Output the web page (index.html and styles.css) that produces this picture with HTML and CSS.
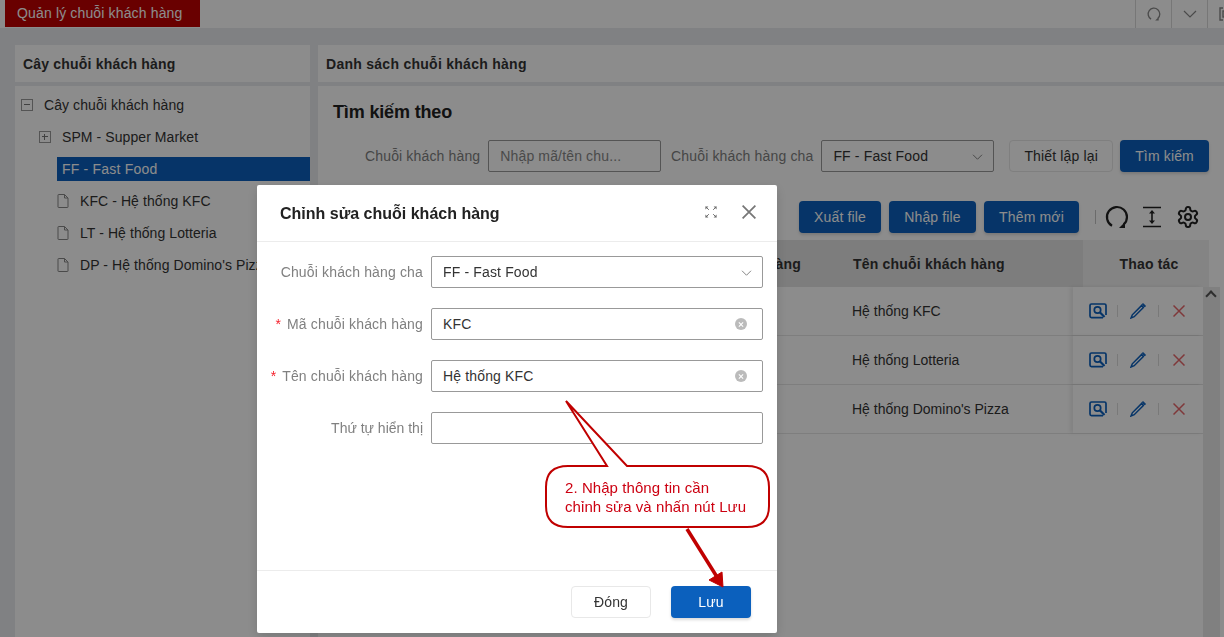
FILE: index.html
```html
<!DOCTYPE html>
<html lang="vi">
<head>
<meta charset="utf-8">
<title>Quản lý chuỗi khách hàng</title>
<link rel="stylesheet" href="styles.css">
</head>
<body>
<svg class="sprite" aria-hidden="true">
  <symbol id="i-refresh" viewBox="0 0 24 24"><path d="M7 20.7A10 10 0 1 1 18.7 19.4" fill="none" stroke="currentColor" stroke-width="2.2"/><path d="M20 17v6h-6z" fill="currentColor"/></symbol>
  <symbol id="i-search" viewBox="0 0 18 16"><path d="M14 14.6H2.5a1.5 1.5 0 0 1-1.5-1.5V2.5A1.5 1.5 0 0 1 2.5 1h13A1.5 1.5 0 0 1 17 2.500V12" fill="none" stroke="currentColor" stroke-width="1.700"/><circle cx="8.500" cy="7" r="3.200" fill="none" stroke="currentColor" stroke-width="1.700"/><path d="M10.800 9.300l4.700 4.700" stroke="currentColor" stroke-width="2.200"/></symbol>
  <symbol id="i-pencil" viewBox="0 0 16 16"><path d="M11.500 2.600L2.300 11.800 1 15l3.200-1.300L13.400 4.500z" fill="none" stroke="currentColor" stroke-width="1.500"/><path d="M12 1.500l1-1 2.500 2.500-1 1z" fill="currentColor" stroke="currentColor"/></symbol>
  <symbol id="i-x" viewBox="0 0 12 12"><path d="M.5.500l11 11M11.500.500l-11 11" stroke="currentColor" stroke-width="1.500" fill="none"/></symbol>
  <symbol id="i-file" viewBox="0 0 12 14"><path d="M1.500.500H7.500L11 4v9a.5.5 0 0 1-.5.500h-9a.5.5 0 0 1-.5-.500V1a.5.5 0 0 1 .5-.500zM7.500.500V4H11" fill="none" stroke="currentColor"/></symbol>
  <symbol id="i-chevron" viewBox="0 0 14 8"><path d="M1 1l6 6 6-6" fill="none" stroke="currentColor" stroke-width="1.200"/></symbol>
</svg>

<header class="topbar">
  <div class="tab">Quản lý chuỗi khách hàng</div>
  <div class="top-tools">
    <div class="top-tool"><svg class="ic-14"><use href="#i-refresh"/></svg></div>
    <div class="top-tool"><svg class="ic-chev-top"><use href="#i-chevron"/></svg></div>
    <div class="top-tool">
      <svg class="ic-14" viewBox="0 0 14 14"><path d="M4 1H1v12h3M10 1h3v12h-3" fill="none" stroke="currentColor" stroke-width="1.400"/><rect x="4" y="4" width="6" height="6" fill="none" stroke="currentColor" stroke-width="1.400"/></svg>
    </div>
  </div>
</header>

<main class="workspace">
  <section class="col-tree">
    <h2 class="panel-head panel-head-tree">Cây chuỗi khách hàng</h2>
    <div class="panel-body tree">
      <div class="node"><span class="box box-minus"></span><span>Cây chuỗi khách hàng</span></div>
      <div class="node lvl-1"><span class="box box-plus"></span><span>SPM - Supper Market</span></div>
      <div class="node lvl-sel"><span class="sel">FF - Fast Food</span></div>
      <div class="node lvl-2"><svg class="ic-file"><use href="#i-file"/></svg><span>KFC - Hệ thống KFC</span></div>
      <div class="node lvl-2"><svg class="ic-file"><use href="#i-file"/></svg><span>LT - Hệ thống Lotteria</span></div>
      <div class="node lvl-2"><svg class="ic-file"><use href="#i-file"/></svg><span>DP - Hệ thống Domino's Pizza</span></div>
    </div>
  </section>

  <section class="col-list">
    <h2 class="panel-head">Danh sách chuỗi khách hàng</h2>
    <div class="panel-body list">
      <h3 class="search-title">Tìm kiếm theo</h3>
      <div class="filters">
        <label class="flt-label">Chuỗi khách hàng</label>
        <div class="field flt-field placeholder">Nhập mã/tên chu...</div>
        <label class="flt-label flt-label-2">Chuỗi khách hàng cha</label>
        <div class="field flt-field">FF - Fast Food<svg class="ic-chev"><use href="#i-chevron"/></svg></div>
        <button class="btn btn-plain btn-reset">Thiết lập lại</button>
        <button class="btn btn-primary btn-find">Tìm kiếm</button>
      </div>
      <div class="toolbar">
        <button class="btn btn-primary btn-export">Xuất file</button>
        <button class="btn btn-primary btn-import">Nhập file</button>
        <button class="btn btn-primary btn-add">Thêm mới</button>
        <span class="tool-sep"></span>
        <svg class="tool-ic tool-refresh"><use href="#i-refresh"/></svg>
        <svg class="tool-ic tool-height" viewBox="0 0 18 22"><path d="M0 1.500h18M0 20.500h18" stroke="currentColor" stroke-width="1.600"/><path d="M9 5v12" stroke="currentColor" stroke-width="1.600"/><path d="M9 4l-3 3.500h6zM9 18l-3-3.500h6z" fill="currentColor"/></svg>
        <svg class="tool-ic tool-gear" viewBox="0 0 24 24" fill="none" stroke="currentColor" stroke-width="2"><path d="M12.220 2h-.44a2 2 0 0 0-2 2v.18a2 2 0 0 1-1 1.730l-.43.25a2 2 0 0 1-2 0l-.15-.08a2 2 0 0 0-2.730.73l-.22.38a2 2 0 0 0 .73 2.730l.15.1a2 2 0 0 1 1 1.720v.51a2 2 0 0 1-1 1.740l-.15.09a2 2 0 0 0-.73 2.730l.22.38a2 2 0 0 0 2.730.73l.15-.08a2 2 0 0 1 2 0l.43.25a2 2 0 0 1 1 1.730V20a2 2 0 0 0 2 2h.44a2 2 0 0 0 2-2v-.18a2 2 0 0 1 1-1.730l.43-.25a2 2 0 0 1 2 0l.15.08a2 2 0 0 0 2.730-.73l.22-.39a2 2 0 0 0-.73-2.730l-.15-.08a2 2 0 0 1-1-1.740v-.5a2 2 0 0 1 1-1.740l.15-.09a2 2 0 0 0 .73-2.730l-.22-.38a2 2 0 0 0-2.730-.73l-.15.08a2 2 0 0 1-2 0l-.43-.25a2 2 0 0 1-1-1.730V4a2 2 0 0 0-2-2z"/><circle cx="12" cy="12" r="3"/></svg>
      </div>
      <div class="grid-wrap">
        <div class="grid-head">
          <div class="gh-main"><span class="cell-code">Mã chuỗi khách hàng</span><span class="cell-name">Tên chuỗi khách hàng</span></div>
          <div class="gh-act">Thao tác</div>
        </div>
        <div class="grid-body">
          <div class="rows">
            <div class="row">
              <div class="row-main"><span class="cell-code">KFC</span><span class="cell-name">Hệ thống KFC</span></div>
              <div class="row-act">
                <svg class="a-search"><use href="#i-search"/></svg><i class="a-sep"></i>
                <svg class="a-pencil"><use href="#i-pencil"/></svg><i class="a-sep"></i>
                <svg class="a-x"><use href="#i-x"/></svg>
              </div>
            </div>
            <div class="row">
              <div class="row-main"><span class="cell-code">LT</span><span class="cell-name">Hệ thống Lotteria</span></div>
              <div class="row-act">
                <svg class="a-search"><use href="#i-search"/></svg><i class="a-sep"></i>
                <svg class="a-pencil"><use href="#i-pencil"/></svg><i class="a-sep"></i>
                <svg class="a-x"><use href="#i-x"/></svg>
              </div>
            </div>
            <div class="row">
              <div class="row-main"><span class="cell-code">DP</span><span class="cell-name">Hệ thống Domino's Pizza</span></div>
              <div class="row-act">
                <svg class="a-search"><use href="#i-search"/></svg><i class="a-sep"></i>
                <svg class="a-pencil"><use href="#i-pencil"/></svg><i class="a-sep"></i>
                <svg class="a-x"><use href="#i-x"/></svg>
              </div>
            </div>
          </div>
          <div class="scrollbar"><span class="scroll-up"></span></div>
        </div>
      </div>
    </div>
  </section>
</main>

<div class="mask"></div>

<div class="modal">
  <div class="modal-head">
    <h2 class="modal-title">Chỉnh sửa chuỗi khách hàng</h2>
    <svg class="m-expand" viewBox="0 0 14 14"><path d="M1 1l3.500 3.500M13 1L9.500 4.500M1 13l3.500-3.500M13 13l-3.500-3.500" fill="none" stroke="currentColor" stroke-width="1.100"/><path d="M.5.500h3.500L.5 4zM13.500.500H10L13.500 4zM.5 13.500h3.500L.5 10zM13.500 13.500H10L13.500 10z" fill="currentColor"/></svg>
    <svg class="m-close"><use href="#i-x"/></svg>
  </div>
  <div class="modal-form">
    <div class="form-row">
      <label class="form-label">Chuỗi khách hàng cha</label>
      <div class="field form-field">FF - Fast Food<svg class="ic-chev"><use href="#i-chevron"/></svg></div>
    </div>
    <div class="form-row">
      <label class="form-label"><b class="req">*</b>Mã chuỗi khách hàng</label>
      <div class="field form-field">KFC<span class="clear"></span></div>
    </div>
    <div class="form-row">
      <label class="form-label"><b class="req">*</b>Tên chuỗi khách hàng</label>
      <div class="field form-field">Hệ thống KFC<span class="clear"></span></div>
    </div>
    <div class="form-row">
      <label class="form-label form-label-tight">Thứ tự hiển thị</label>
      <div class="field form-field"></div>
    </div>
  </div>
  <div class="modal-foot">
    <button class="btn btn-plain btn-close">Đóng</button>
    <button class="btn btn-primary btn-save">Lưu</button>
  </div>
</div>

<div class="callout">
  <svg class="callout-art" viewBox="0 0 240 200">
    <path class="bubble" d="M21 2L82 67H202Q224 67 224 88V107Q224 128 202 128H23Q1 128 1 107V88Q1 67 23 67H62Z"/>
    <path class="pointer" d="M142 130L172 178"/>
    <path class="pointer-head" d="M178 188L164 181L177 173Z"/>
  </svg>
  <p class="callout-text">2. Nhập thông tin cần<br>chỉnh sửa và nhấn nút Lưu</p>
</div>
</body>
</html>
```
FILE: styles.css
```css
* { box-sizing: border-box; }
html, body { height: 100%; }
body {
  margin: 0;
  height: 637px;
  overflow: hidden;
  background: #eaecef;
  color: #333;
  font: 14px/20px "Liberation Sans", Arial, sans-serif;
  letter-spacing: .15px;
}
h2, h3, p { margin: 0; }
.sprite { position: absolute; width: 0; height: 0; }
button { font: inherit; letter-spacing: inherit; cursor: pointer; }

/* Top bar */
.topbar {
  height: 28px;
  display: flex;
  justify-content: space-between;
  padding-left: 5px;
  background: #fff;
}
.tab {
  width: 195px;
  height: 27px;
  padding: 3px 0 0 12px;
  background: #c00000;
  color: #fff;
}
.top-tools { display: flex; margin-right: -19px; }
.top-tool {
  width: 36px;
  display: flex;
  align-items: center;
  justify-content: center;
  border-left: 1px solid #d9d9d9;
  color: #888;
}
.ic-14 { width: 14px; height: 14px; }
.ic-chev-top { width: 14px; height: 8px; }

/* Columns */
.workspace {
  display: flex;
  gap: 8px;
  height: 609px;
  padding: 17px 0 0 15px;
}
.col-tree { width: 295px; flex: none; display: flex; flex-direction: column; }
.col-list { flex: 1; min-width: 0; display: flex; flex-direction: column; }
.panel-head {
  height: 37px;
  margin-bottom: 4px;
  padding: 9px 8px 0;
  background: #fff;
  font-size: 14px;
  font-weight: 700;
  line-height: 20px;
  letter-spacing: .27px;
  flex: none;
}
.panel-head-tree { letter-spacing: .2px; }
.panel-body { flex: 1; background: #fff; }

/* Tree */
.tree { padding-top: 3px; letter-spacing: .08px; }
.node { height: 32px; display: flex; align-items: center; padding-left: 6px; white-space: nowrap; }
.box {
  position: relative;
  width: 12px;
  height: 12px;
  margin-right: 11px;
  border: 1px solid #999;
  flex: none;
}
.box::before { content: ""; position: absolute; left: 2px; right: 2px; top: 4px; height: 1px; background: #777; }
.box-plus::after { content: ""; position: absolute; top: 2px; bottom: 2px; left: 4px; width: 1px; background: #777; }
.lvl-1 { padding-left: 24px; }
.lvl-sel { padding-left: 42px; }
.sel {
  flex: 1;
  height: 24px;
  padding: 2px 5px;
  background: #0b60bd;
  color: #fff;
  letter-spacing: .2px;
}
.lvl-2 { padding-left: 42px; }
.ic-file { width: 12px; height: 14px; margin-right: 11px; color: #888; flex: none; }

/* List panel */
.list { padding: 0 15px; }
.search-title { padding-top: 15px; font-size: 18px; font-weight: 700; line-height: 22px; letter-spacing: -.15px; color: #222; }
.filters { display: flex; align-items: flex-start; margin-top: 17px; padding-left: 32px; white-space: nowrap; }
.flt-label { height: 32px; line-height: 32px; margin-right: 8px; color: #808080; }
.flt-label-2 { margin-left: 10px; }
.field {
  position: relative;
  display: flex;
  align-items: center;
  border: 1px solid #999;
  border-radius: 2px;
  padding: 0 11px;
  background: #fff;
}
.flt-field { width: 173px; height: 32px; }
.placeholder { color: #888; }
.ic-chev { position: absolute; right: 10px; top: 13px; width: 11px; height: 6px; color: #777; }
.btn { height: 32px; border-radius: 4px; border: 1px solid transparent; padding: 0; }
.btn-primary { background: #0b60bd; color: #fff; box-shadow: 0 2px 3px rgba(0, 0, 0, .15); }
.btn-plain { background: #fff; border-color: #e8e8e8; color: #333; }
.btn-reset { width: 104px; margin-left: 15px; }
.btn-find { width: 89px; margin-left: 7px; }

.toolbar { display: flex; align-items: center; margin-top: 29px; padding-left: 466px; }
.btn-export { width: 82px; }
.btn-import { width: 87px; margin-left: 8px; }
.btn-add { width: 95px; margin-left: 8px; }
.tool-sep { width: 1px; height: 14px; margin-left: 16px; background: #c4c4c4; }
.tool-ic { color: #222; flex: none; }
.tool-refresh { width: 24px; height: 24px; margin-left: 9px; }
.tool-height { width: 18px; height: 22px; margin-left: 14px; }
.tool-gear { width: 24px; height: 24px; margin-left: 15px; }

/* Table */
.grid-wrap { margin-top: 7px; }
.grid-head { display: flex; height: 47px; font-weight: 700; letter-spacing: .2px; }
.gh-main { width: 750px; display: flex; align-items: center; background: #e4e4e4; flex: none; }
.gh-act {
  width: 130px;
  display: flex;
  align-items: center;
  justify-content: center;
  padding-left: 6px;
  background: #f0f0f0;
}
.cell-code { width: 520px; padding-right: 52px; text-align: right; flex: none; }
.grid-body { display: flex; }
.rows { width: 870px; flex: none; }
.row { display: flex; height: 49px; border-bottom: 1px solid #e6e6e6; }
.row-main { width: 740px; display: flex; align-items: center; padding-bottom: 1px; letter-spacing: 0; flex: none; }
.row-main .cell-code { width: 519px; padding: 0 0 0 320px; text-align: left; }
.row-act {
  width: 130px;
  display: flex;
  align-items: center;
  padding-left: 16px;
  background: #fff;
  box-shadow: -3px 0 4px rgba(0, 0, 0, .08);
}
.a-search { width: 18px; height: 16px; color: #0b60bd; }
.a-pencil { width: 16px; height: 16px; color: #0b60bd; }
.a-x { width: 12px; height: 12px; color: #e8676b; }
.a-sep { width: 1px; height: 12px; background: #ddd; margin: 0 12px 0 10px; }
.a-sep:last-of-type { margin: 0 14px 0 12px; }
.scrollbar { position: relative; width: 17px; height: 350px; background: #e9e9e9; flex: none; }
.scroll-up {
  position: absolute;
  left: 4px;
  top: 5px;
  width: 8px;
  height: 8px;
  border-left: 2px solid #555;
  border-top: 2px solid #555;
  transform: rotate(45deg);
}

/* Overlay */
.mask { position: fixed; inset: 0; background: rgba(0, 0, 0, .45); }
.modal {
  position: fixed;
  left: 257px;
  top: 185px;
  width: 520px;
  height: 448px;
  display: flex;
  flex-direction: column;
  background: #fff;
  border-radius: 2px;
  box-shadow: 0 4px 12px rgba(0, 0, 0, .15);
}
.modal-head {
  height: 57px;
  display: flex;
  align-items: center;
  padding: 0 21px 0 23px;
  border-bottom: 1px solid #ececec;
  flex: none;
}
.modal-title { flex: 1; padding-top: 1px; font-size: 16px; font-weight: 700; letter-spacing: 0; color: #222; }
.m-expand { width: 12px; height: 12px; margin: 0 25px 2px 0; color: #666; }
.m-close { width: 14px; height: 14px; margin-bottom: 2px; color: #777; }
.modal-form {
  flex: 1;
  display: flex;
  flex-direction: column;
  gap: 20px;
  padding-top: 14px;
}
.form-row { display: flex; align-items: center; height: 32px; }
.form-label { width: 166px; text-align: right; color: #808080; white-space: nowrap; }
.form-label-tight { letter-spacing: 0; }
.req { margin-right: 6px; color: #f5222d; font-weight: 400; }
.form-field { width: 332px; height: 32px; margin-left: 8px; }
.clear {
  position: absolute;
  right: 15px;
  top: 9px;
  width: 12px;
  height: 12px;
  border-radius: 50%;
  background: #bbb;
}
.clear::before, .clear::after {
  content: "";
  position: absolute;
  left: 3px;
  top: 5.500px;
  width: 6px;
  height: 1px;
  background: #fff;
  transform: rotate(45deg);
}
.clear::after { transform: rotate(-45deg); }
.modal-foot {
  height: 63px;
  display: flex;
  justify-content: flex-end;
  gap: 20px;
  padding: 15px 26px 0 0;
  border-top: 1px solid #ececec;
  flex: none;
}
.btn-close, .btn-save { width: 80px; }

/* Annotation */
.callout { position: fixed; left: 545px; top: 399px; width: 240px; height: 200px; }
.callout-art { display: block; width: 240px; height: 200px; overflow: visible; }
.bubble { fill: #fff; stroke: #c00000; stroke-width: 2; }
.pointer { fill: none; stroke: #c00000; stroke-width: 3.500; }
.pointer-head { fill: #c00000; stroke: #c00000; }
.callout-text { position: absolute; left: 20px; top: 79px; color: #cc0011; font-size: 15px; line-height: 19px; letter-spacing: .07px; white-space: nowrap; }
```
